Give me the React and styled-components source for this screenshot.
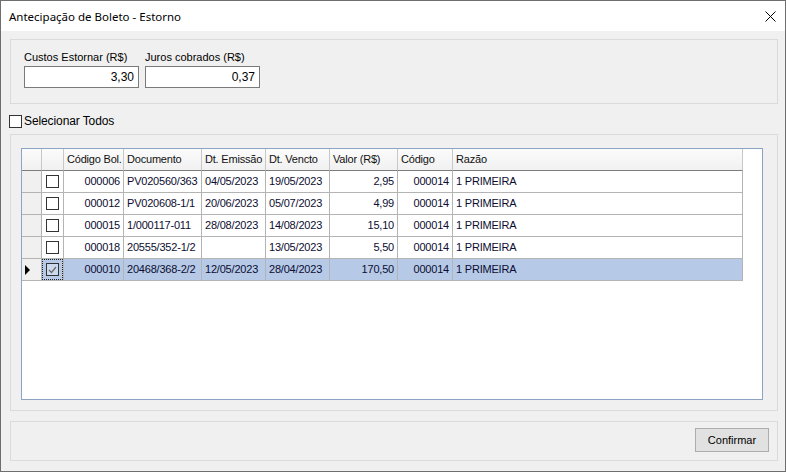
import React from 'react';
import styled, { createGlobalStyle } from 'styled-components';

const GlobalStyle = createGlobalStyle`
  html, body {
    margin: 0;
    padding: 0;
    background: #ffffff;
  }
  * {
    box-sizing: border-box;
  }
`;

const Window = styled.div`
  width: 786px;
  height: 472px;
  border: 1px solid #6e6e6e;
  display: flex;
  flex-direction: column;
  font-family: "Liberation Sans", Arial, sans-serif;
  font-size: 11px;
  color: #000;
  background: #f0f0f0;
`;

const TitleBar = styled.div`
  height: 30px;
  flex: none;
  background: #ffffff;
  display: flex;
  align-items: center;
  justify-content: space-between;
  padding: 0 9px 0 8px;
`;

const Title = styled.span`
  font-family: "Noto Sans", "Open Sans", sans-serif;
  font-size: 11.5px;
  color: #000;
`;

const CloseButton = styled.div`
  width: 12px;
  height: 12px;
  display: flex;
  align-items: center;
  justify-content: center;
`;

const Body = styled.div`
  flex: 1;
  display: flex;
  flex-direction: column;
  padding: 8px 7px 10px 9px;
`;

const Panel = styled.div`
  flex: none;
  height: ${p => p.$h}px;
  border: 1px solid #dadada;
  margin-top: ${p => p.$mt || 0}px;
`;

const FieldsPanel = styled(Panel)`
  display: flex;
  gap: 6px;
  padding: 11px 13px 0;
`;

const Field = styled.div`
  display: flex;
  flex-direction: column;
`;

const FieldLabel = styled.label`
  height: 15px;
  line-height: 13px;
`;

const NumInput = styled.div`
  width: 115px;
  height: 22px;
  border: 1px solid #7a7a7a;
  background: #fff;
  text-align: right;
  padding: 0 4px;
  line-height: 20px;
  font-size: 12px;
`;

const CheckRow = styled.div`
  height: 30px;
  flex: none;
  display: flex;
  align-items: center;
  gap: 2px;
  margin-left: -1px;
  padding-top: 4px;
`;

const Box = styled.span`
  width: 13px;
  height: 13px;
  flex: none;
  border: 1px solid #333;
  background: ${p => (p.$selected ? '#cdd9ec' : '#fff')};
  display: flex;
  align-items: center;
  justify-content: center;
`;

const CheckLabel = styled.span`
  font-size: 12px;
  letter-spacing: -0.1px;
`;

const GridPanel = styled(Panel)`
  padding: 13px 13px 10px 10px;
`;

const Grid = styled.div`
  width: 742px;
  height: 252px;
  border: 1px solid #8ea4c4;
  background: #fff;
  overflow: hidden;
  letter-spacing: -0.2px;
`;

const COLS = '20px 22px 60px 78px 64px 64px 68px 55px 290px';

const Row = styled.div`
  display: grid;
  grid-template-columns: ${COLS};
  height: 22px;
`;

const HeadCell = styled.div`
  background: linear-gradient(#fbfbfb, #f1f1f1);
  border-right: 1px solid #c8c8c8;
  border-bottom: 1px solid #7d7d7d;
  padding: 0 3px;
  line-height: 21px;
  white-space: nowrap;
  overflow: hidden;
  color: #111;
`;

const Cell = styled.div`
  background: ${p => (p.$selected ? '#b6cae8' : '#fff')};
  border-right: 1px solid #b4b4b4;
  border-bottom: 1px solid #b4b4b4;
  padding: 0 3px;
  line-height: 21px;
  white-space: nowrap;
  overflow: hidden;
  text-align: ${p => (p.$right ? 'right' : 'left')};
  color: #0c0c30;
`;

const IndicatorCell = styled.div`
  background: #f0f0f0;
  border-right: 1px solid #b4b4b4;
  border-bottom: 1px solid #b4b4b4;
  display: flex;
  align-items: center;
  padding-left: 3px;
`;

const CheckCell = styled(Cell)`
  display: flex;
  align-items: center;
  justify-content: center;
  padding: 0;
  position: relative;
  ${p =>
    p.$selected &&
    `&::after {
      content: '';
      position: absolute;
      inset: 0;
      border: 1px dotted #222;
    }`}
`;

const Arrow = styled.span`
  width: 0;
  height: 0;
  border-top: 5px solid transparent;
  border-bottom: 5px solid transparent;
  border-left: 5px solid #000;
`;

const BottomPanel = styled(Panel)`
  display: flex;
  justify-content: flex-end;
  padding: 6px 8px 0 0;
`;

const Button = styled.button`
  width: 74px;
  height: 24px;
  border: 1px solid #adadad;
  background: #e1e1e1;
  font-family: "Liberation Sans", Arial, sans-serif;
  font-size: 11px;
  color: #000;
  padding: 0;
`;

const rows = [
  { cod: '000006', doc: 'PV020560/363', emi: '04/05/2023', venc: '19/05/2023', valor: '2,95' },
  { cod: '000012', doc: 'PV020608-1/1', emi: '20/06/2023', venc: '05/07/2023', valor: '4,99' },
  { cod: '000015', doc: '1/000117-011', emi: '28/08/2023', venc: '14/08/2023', valor: '15,10' },
  { cod: '000018', doc: '20555/352-1/2', emi: '', venc: '13/05/2023', valor: '5,50' },
  { cod: '000010', doc: '20468/368-2/2', emi: '12/05/2023', venc: '28/04/2023', valor: '170,50', selected: true },
];

const headers = ['', '', 'Código Bol.', 'Documento', 'Dt. Emissão', 'Dt. Vencto', 'Valor (R$)', 'Código', 'Razão'];

function CheckMark() {
  return (
    <svg width="9" height="8" viewBox="0 0 9 8">
      <path d="M1 4 L3.5 6.5 L8 1" fill="none" stroke="#6a6a6a" strokeWidth="1.2" />
    </svg>
  );
}

export default function App() {
  return (
    <>
      <GlobalStyle />
      <Window>
        <TitleBar>
          <Title>Antecipação de Boleto - Estorno</Title>
          <CloseButton>
            <svg width="11" height="11" viewBox="0 0 11 11">
              <path d="M0.5 0.5 L10.5 10.5 M10.5 0.5 L0.5 10.5" stroke="#000" strokeWidth="1" />
            </svg>
          </CloseButton>
        </TitleBar>
        <Body>
          <FieldsPanel $h={65}>
            <Field>
              <FieldLabel>Custos Estornar (R$)</FieldLabel>
              <NumInput>3,30</NumInput>
            </Field>
            <Field>
              <FieldLabel>Juros cobrados (R$)</FieldLabel>
              <NumInput>0,37</NumInput>
            </Field>
          </FieldsPanel>

          <CheckRow>
            <Box />
            <CheckLabel>Selecionar Todos</CheckLabel>
          </CheckRow>

          <GridPanel $h={277}>
            <Grid>
              <Row>
                {headers.map((h, i) => (
                  <HeadCell key={i}>{h}</HeadCell>
                ))}
              </Row>
              {rows.map(r => (
                <Row key={r.cod}>
                  <IndicatorCell>{r.selected && <Arrow />}</IndicatorCell>
                  <CheckCell $selected={r.selected}>
                    <Box $selected={r.selected}>{r.selected && <CheckMark />}</Box>
                  </CheckCell>
                  <Cell $selected={r.selected} $right>{r.cod}</Cell>
                  <Cell $selected={r.selected}>{r.doc}</Cell>
                  <Cell $selected={r.selected}>{r.emi}</Cell>
                  <Cell $selected={r.selected}>{r.venc}</Cell>
                  <Cell $selected={r.selected} $right>{r.valor}</Cell>
                  <Cell $selected={r.selected} $right>000014</Cell>
                  <Cell $selected={r.selected}>1 PRIMEIRA</Cell>
                </Row>
              ))}
            </Grid>
          </GridPanel>

          <BottomPanel $h={40} $mt={10}>
            <Button>Confirmar</Button>
          </BottomPanel>
        </Body>
      </Window>
    </>
  );
}
